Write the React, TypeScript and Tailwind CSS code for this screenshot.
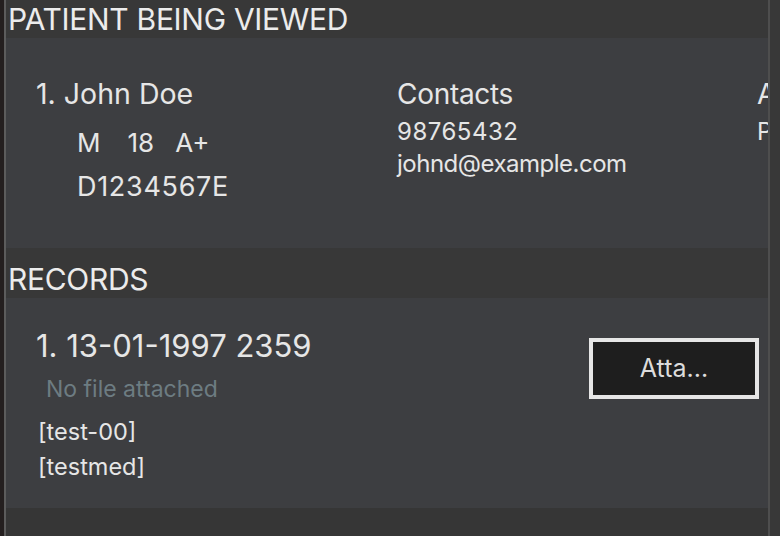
import React from 'react';

const font = { fontFamily: 'Inter, "Noto Sans", sans-serif' };

const SectionHeader: React.FC<{ title: string; className?: string }> = ({ title, className = '' }) => (
  <div className={`bg-[#383838] px-[2px] text-[30px] leading-none text-[#ececec] tracking-[-0.3px] ${className}`}>
    {title}
  </div>
);

export default function App() {
  return (
    <div className="flex h-[536px] w-[780px] overflow-hidden bg-[#383838]" style={font}>
      {/* left window edge */}
      <div className="w-[4px] bg-[#241f1f]" />
      <div className="w-[2px] bg-[#5c5c5c]" />

      <div className="flex min-w-0 flex-1 flex-col">
        <SectionHeader title="PATIENT BEING VIEWED" className="h-[38px] pt-[4px]" />

        {/* patient card */}
        <div className="h-[210px] overflow-hidden bg-[#3d3e41] pl-[30px] pt-[42px]">
          <div className="flex text-[#e6e6e6]">
            <div className="w-[361px] shrink-0">
              <div className="text-[28.5px] leading-none">1. John Doe</div>
              <div className="ml-[41px] mt-[21px] flex text-[26px] leading-none">
                <span>M</span>
                <span className="ml-[27px]">18</span>
                <span className="ml-[21px]">A+</span>
              </div>
              <div className="ml-[41px] mt-[17px] text-[27px] leading-none tracking-[0.7px]">D1234567E</div>
            </div>
            <div className="w-[360px] shrink-0">
              <div className="text-[28px] leading-none tracking-[-0.3px]">Contacts</div>
              <div className="mt-[12px] text-[24px] leading-none tracking-[0.5px]">98765432</div>
              <div className="mt-[8px] text-[24px] leading-none tracking-[-0.5px]">johnd@example.com</div>
            </div>
            <div className="shrink-0">
              <div className="text-[28px] leading-none">Allergies</div>
              <div className="mt-[12px] text-[24px] leading-none">Penicillin</div>
            </div>
          </div>
        </div>

        <SectionHeader title="RECORDS" className="h-[50px] pt-[16px]" />

        {/* record card */}
        <div className="flex h-[210px] bg-[#3d3e41] pl-[30px] pr-[9px]">
          <div className="flex-1 pt-[32px] text-[#e6e6e6]">
            <div className="text-[31px] leading-none">1. 13-01-1997 2359</div>
            <div className="ml-[10px] mt-[17px] text-[23px] leading-none text-[#6d7c82]">
              No file attached
            </div>
            <div className="ml-[2px] mt-[19px] text-[23.5px] leading-none">[test-00]</div>
            <div className="ml-[2px] mt-[11px] text-[23.5px] leading-none">[testmed]</div>
          </div>
          <div className="pt-[40px]">
            <button className="flex h-[61px] w-[170px] items-center justify-center border-[4px] border-[#e6e6e6] bg-[#1e1e1e] text-[25px] text-[#dcdcdc]">
              Atta...
            </button>
          </div>
        </div>

        <div className="flex-1 bg-[#363636]" />
      </div>

      {/* right scroll edge */}
      <div className="w-[2px] bg-[#4e4e4e]" />
      <div className="w-[10px] bg-[#383838]" />
    </div>
  );
}
